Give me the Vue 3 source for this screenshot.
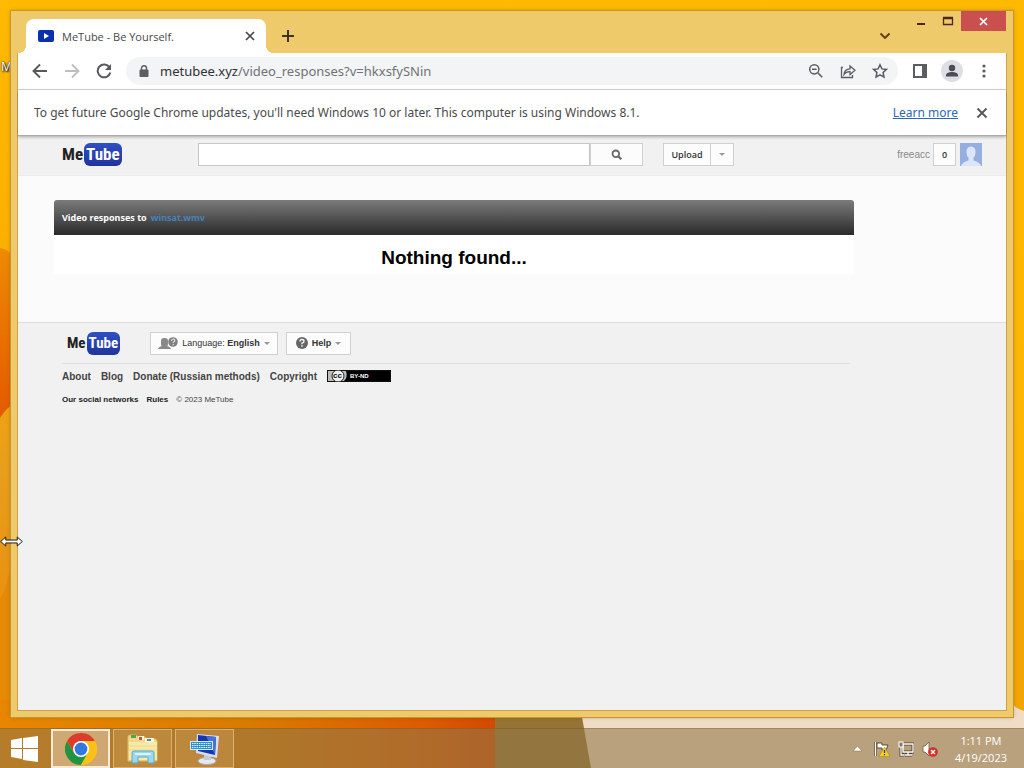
<script setup>
import { ref } from 'vue'

const query = ref('')
const address = ref('metubee.xyz/video_responses?v=hkxsfySNin')
const links = ['About', 'Blog', 'Donate (Russian methods)', 'Copyright']
</script>

<template>
  <div class="desktop">
    <svg class="wallpaper" viewBox="0 0 1024 768" preserveAspectRatio="none" aria-hidden="true">
      <defs>
        <linearGradient id="sky" x1="0" y1="0" x2="0" y2="1">
          <stop offset="0" stop-color="#ffb900" />
          <stop offset=".3" stop-color="#fcb100" />
          <stop offset=".62" stop-color="#e89d1c" />
          <stop offset="1" stop-color="#e88400" />
        </linearGradient>
        <linearGradient id="side" x1="0" y1="0" x2="0" y2="1">
          <stop offset="0" stop-color="#ffb900" />
          <stop offset="1" stop-color="#fbb40a" />
        </linearGradient>
        <linearGradient id="petal" x1="0" y1="0" x2="0" y2="1">
          <stop offset="0" stop-color="#ee8a00" />
          <stop offset="1" stop-color="#e45a00" />
        </linearGradient>
        <linearGradient id="floor" x1="0" y1="0" x2="1" y2="0">
          <stop offset="0" stop-color="#e88600" />
          <stop offset=".5" stop-color="#d97b00" />
          <stop offset=".85" stop-color="#dc5c00" />
          <stop offset="1" stop-color="#d24a00" />
        </linearGradient>
      </defs>
      <rect width="1024" height="768" fill="url(#sky)" />
      <rect x="1000" width="24" height="768" fill="url(#side)" />
      <path d="M0 248Q12 250 14 262V404Q8 406 0 418Z" fill="url(#petal)" />
      <path d="M14 548V717H0V600Q10 580 14 548Z" fill="#e58a06" />
      <rect y="700" width="495" height="68" fill="url(#floor)" />
      <path d="M495 700H580L592 768H495Z" fill="#977434" />
      <path d="M579 700H1024V768H591Z" fill="#f1dcc5" />
      <path d="M1013 560H1024V711Q1016 709 1013 704Z" fill="#f2a605" />
    </svg>
    <span class="desktop-label">M</span>

    <div class="stage">
      <section class="window">
        <header class="titlebar">
          <div class="tab">
            <svg width="16" height="12" viewBox="0 0 16 12"><rect width="16" height="12" rx="2" fill="#0b2fae" /><path d="M6 3l5 3-5 3z" fill="#fff" /></svg>
            <span class="tab-title">MeTube - Be Yourself.</span>
            <button class="plain" aria-label="Close tab"><svg width="10" height="10" viewBox="0 0 10 10"><path d="M1 1l8 8M9 1L1 9" stroke="#45484b" stroke-width="1.7" /></svg></button>
          </div>
          <button class="plain new-tab" aria-label="New tab"><svg width="12" height="12" viewBox="0 0 12 12"><path d="M6 0v12M0 6h12" stroke="#3e3322" stroke-width="2" /></svg></button>
          <button class="plain tab-search" aria-label="Search tabs"><svg width="12" height="8" viewBox="0 0 12 8"><path d="M1.500 1.500L6 6l4.500-4.500" fill="none" stroke="#5c3d12" stroke-width="1.800" /></svg></button>
          <div class="controls">
            <button class="plain" aria-label="Minimize"><svg width="27" height="20" viewBox="0 0 27 20"><path d="M10 13h8" stroke="#4b2808" stroke-width="2" /></svg></button>
            <button class="plain" aria-label="Maximize"><svg width="27" height="20" viewBox="0 0 27 20"><path d="M9.500 7.500h9v6h-9zM9 6.500h10" fill="none" stroke="#4b2808" stroke-width="1.300" /></svg></button>
            <button class="plain close" aria-label="Close"><svg width="45" height="20" viewBox="0 0 45 20"><path d="M19 7l7 7M26 7l-7 7" stroke="#fff" stroke-width="1.700" /></svg></button>
          </div>
        </header>

        <div class="view">
          <nav class="toolbar">
            <button class="plain tool" aria-label="Back"><svg width="16" height="16" viewBox="0 0 16 16"><path d="M15 8H2M8 1.500L1.500 8 8 14.500" fill="none" stroke="#57595c" stroke-width="1.900" /></svg></button>
            <button class="plain tool" aria-label="Forward"><svg width="16" height="16" viewBox="0 0 16 16"><path d="M1 8h13M8 1.500L14.500 8 8 14.500" fill="none" stroke="#bcbebf" stroke-width="1.800" /></svg></button>
            <button class="plain tool" aria-label="Reload"><svg width="16" height="16" viewBox="0 0 16 16"><path d="M13.500 4.500A6.400 6.400 0 1 0 14.300 9.500" fill="none" stroke="#57595c" stroke-width="2" /><path d="M15 1v6H9z" fill="#57595c" /></svg></button>
            <div class="omnibox">
              <svg width="10" height="13" viewBox="0 0 10 13"><rect x="0.500" y="4.500" width="9" height="7.500" rx="1" fill="#5b5e61" /><path d="M2.500 5V3.300a2.500 2.500 0 0 1 5 0V5" fill="none" stroke="#5b5e61" stroke-width="1.400" /></svg>
              <span class="address"><span class="host">{{ address.split('/')[0] }}</span>/{{ address.split('/')[1] }}</span>
              <button class="plain" aria-label="Zoom"><svg width="16" height="16" viewBox="0 0 16 16"><circle cx="6.300" cy="6.300" r="4.600" fill="none" stroke="#5b5e61" stroke-width="1.500" /><path d="M4 6.300h4.600M9.800 9.800l4.400 4.400" stroke="#5b5e61" stroke-width="1.600" /></svg></button>
              <button class="plain" aria-label="Share"><svg width="16" height="16" viewBox="0 0 16 16"><path d="M3 4.500H1.500V14.500H12.500V12M4 11.500Q4.300 6.200 10 5.800V3L15 7.300 10 11.500V8.700Q6 8.500 4 11.500Z" fill="none" stroke="#5b5e61" stroke-width="1.300" /></svg></button>
              <button class="plain" aria-label="Bookmark"><svg width="16" height="16" viewBox="0 0 16 16"><path d="M8 1.800l1.900 4.100 4.500.5-3.300 3.100.9 4.500L8 11.800 4 14l.9-4.500L1.600 6.400l4.500-.5z" fill="none" stroke="#5b5e61" stroke-width="1.500" /></svg></button>
            </div>
            <button class="plain tool" aria-label="Side panel"><svg width="14" height="14" viewBox="0 0 14 14"><rect x="1" y="1" width="12" height="12" fill="none" stroke="#5b5e61" stroke-width="2" /><path d="M9 1h4v12H9z" fill="#5b5e61" /></svg></button>
            <button class="plain tool" aria-label="Profile"><svg width="22" height="22" viewBox="0 0 22 22"><circle cx="11" cy="11" r="11" fill="#dddfe4" /><circle cx="11" cy="8" r="3.200" fill="#494d54" /><path d="M5 16.500v-1.300C5 12.700 9 12 11 12s6 .7 6 3.200v1.300z" fill="#494d54" /></svg></button>
            <button class="plain tool" aria-label="Menu"><svg width="4" height="14" viewBox="0 0 4 14"><circle cx="2" cy="2" r="1.600" fill="#5b5e61" /><circle cx="2" cy="7" r="1.600" fill="#5b5e61" /><circle cx="2" cy="12" r="1.600" fill="#5b5e61" /></svg></button>
          </nav>

          <div class="notice">
            <p>To get future Google Chrome updates, you'll need Windows 10 or later. This computer is using Windows 8.1.</p>
            <a href="#">Learn more</a>
            <button class="plain" aria-label="Dismiss"><svg width="12" height="12" viewBox="0 0 12 12"><path d="M1.500 1.500l9 9M10.500 1.500l-9 9" stroke="#55585b" stroke-width="1.900" /></svg></button>
          </div>

          <div class="page">
            <header class="masthead">
              <a class="logo" href="#"><span>Me</span><span class="tube">Tube</span></a>
              <form class="search" @submit.prevent>
                <input v-model="query" type="text" aria-label="Search" />
                <button class="btn" aria-label="Search"><svg width="12" height="12" viewBox="0 0 12 12"><circle cx="4.800" cy="4.800" r="3.300" fill="none" stroke="#666" stroke-width="1.800" /><path d="M7.300 7.300l3 3" stroke="#666" stroke-width="2.200" /></svg></button>
              </form>
              <div class="upload">
                <button class="btn">Upload</button>
                <button class="btn more" aria-label="More"><span class="caret"></span></button>
              </div>
              <div class="account">
                <a href="#">freeacc</a>
                <button class="btn count">0</button>
                <svg class="avatar" width="22" height="23" viewBox="0 0 22 23"><rect width="22" height="23" fill="#96afe0" /><path d="M1 23Q2 19 8.500 17.500V14.500Q6.500 13 6.500 9.500 6 4 11 3.500 16 4 15.500 9.500 15.500 13 13.500 14.500V17.500Q20 19 21 23Z" fill="#dce6fa" /></svg>
              </div>
            </header>

            <main>
              <h1 class="bar">Video responses to <a href="#">winsat.wmv</a></h1>
              <h2>Nothing found...</h2>
            </main>

            <footer>
              <div class="foot-top">
                <a class="logo" href="#"><span>Me</span><span class="tube">Tube</span></a>
                <button class="btn language">
                  <svg width="20" height="13" viewBox="0 0 20 13"><rect x="3" y="1" width="7" height="9" rx="3" fill="#888" /><path d="M0 12q1-3 5-3h3q4 0 5 3z" fill="#888" /><circle cx="15" cy="5" r="4.800" fill="#808080" /><path d="M13.500 4q0-2 1.700-2t1.600 1.500q0 1-1.600 1.800V6M15.200 7v1.300" fill="none" stroke="#e4e4e4" stroke-width="1.100" /></svg>
                  <span>Language: <b>English</b></span><span class="caret"></span>
                </button>
                <button class="btn help">
                  <svg width="12" height="12" viewBox="0 0 12 12"><circle cx="6" cy="6" r="6" fill="#666" /><path d="M4 4.500Q4 2.500 6 2.500t2 1.700Q8 5.300 6 6.200V7.200M6 8.300v1.500" fill="none" stroke="#f5f5f5" stroke-width="1.400" /></svg>
                  <b>Help</b><span class="caret"></span>
                </button>
              </div>
              <div class="links">
                <a v-for="l in links" :key="l" href="#">{{ l }}</a>
                <svg width="64" height="12" viewBox="0 0 64 12" role="img" aria-label="CC BY-ND"><rect width="64" height="12" fill="#111" /><rect x="1" y="1" width="62" height="10" fill="#bbb" /><path d="M19 1h44v10H17q4-4 2-10z" fill="#000" /><circle cx="11" cy="6" r="6" fill="#eee" stroke="#222" /><text x="6" y="8" font-family="Liberation Sans" font-weight="bold" font-size="8" fill="#111">cc</text><text x="23" y="8" font-family="Liberation Sans" font-weight="bold" font-size="6" fill="#fff">BY-ND</text></svg>
              </div>
              <div class="legal"><a href="#">Our social networks</a><a href="#">Rules</a><span>© 2023 MeTube</span></div>
            </footer>
          </div>
        </div>
      </section>
    </div>

    <div class="taskbar">
      <button class="plain start" aria-label="Start"><svg width="27" height="26" viewBox="0 0 27 26"><path d="M0 4l11-2v10H0zM12 2l15-2v12H12zM0 13h11v10L0 21zM12 13h15v13l-15-2z" fill="#fff" /></svg></button>
      <button class="plain task active" aria-label="Google Chrome">
        <svg width="32" height="32" viewBox="0 0 32 32"><circle cx="16" cy="16" r="16" fill="#fbc116" /><path d="M2.140 8A16 16 0 0 1 29.860 8H16L9 20z" fill="#dc3c2e" /><path d="M2.140 8A16 16 0 0 0 16 32L22.900 20 9 20z" fill="#229342" /><path d="M16 8h13.860A16 16 0 0 1 16 32l6.900-12z" fill="#fbc116" /><circle cx="16" cy="16" r="8" fill="#fff" /><circle cx="16" cy="16" r="6.400" fill="#3478df" /></svg>
      </button>
      <button class="plain task" aria-label="File Explorer">
        <svg width="32" height="30" viewBox="0 0 32 30"><path d="M1 3q0-2 2-2h6l2 2h7l2 2h8q2 0 2 2v20H1z" fill="#efd889" stroke="#d8bd68" /><path d="M4 1h5v3H4z" fill="#49a849" /><path d="M11 2h6v4h-6z" fill="#fff4cc" /><path d="M12 3h3v3h-3z" fill="#d14f36" /><path d="M18 4h9v5h-9z" fill="#f8f6e2" /><path d="M20 5h4v2h-4z" fill="#3c9798" /><path d="M2 8h28v18H2z" fill="#f7e9a8" /><path d="M2 12h28M2 16h28" stroke="#ecd98a" /><path d="M5 29v-10q0-2 2-2h18q2 0 2 2v10h-6v-6H11v6z" fill="#9bd8ef" stroke="#59a9ce" /><path d="M8 20h16" stroke="#d9f4ff" stroke-width="2" /></svg>
      </button>
      <button class="plain task" aria-label="On-Screen Keyboard">
        <svg width="32" height="32" viewBox="0 0 32 32"><ellipse cx="18" cy="28" rx="9" ry="3.500" fill="#e5e8ed" stroke="#a8acb5" /><path d="M15 21h7v6h-7z" fill="#c4c9d2" /><path d="M8 1L30 3 28 25 7 20z" fill="#d9def0" /><path d="M9 2L27 4 26 22 9 18z" fill="#1336b1" /><path d="M17 3L27 4 26 22z" fill="#4870dc" /><rect x="1.500" y="8.500" width="22" height="8" fill="#2b8fca" stroke="#d5ecfa" /><path d="M3 10.500h19M3 12.500h19M3 14.500h19" stroke="#e5f4ff" stroke-width="1.200" stroke-dasharray="1.500 .8" /></svg>
      </button>
      <div class="tray">
        <svg width="9" height="6" viewBox="0 0 9 6"><path d="M0 5L4.500 0 9 5z" fill="#fff" stroke="#806c4d" stroke-width=".5" /></svg>
        <svg width="16" height="16" viewBox="0 0 16 16"><path d="M1.500 1v14" stroke="#5d4b32" stroke-width="3" /><path d="M1.500 1v14" stroke="#fff" stroke-width="1.400" /><path d="M3 2h5v2h6l-2 5H8V7H3z" fill="#fff" stroke="#594c37" /><path d="M10.500 6L16 15.500H5z" fill="#f6d51f" stroke="#a78c00" stroke-width=".6" /><path d="M10.500 9v3M10.500 13v1.300" stroke="#443a10" stroke-width="1.300" /></svg>
        <svg width="16" height="16" viewBox="0 0 16 16"><path d="M5 3h10v8H4M7 14h7M10 11v3M3 1v13h3" fill="none" stroke="#50432f" stroke-width="3" /><path d="M5 3h10v8H5zM7 14h7M10 11v3M3 6v8h3" fill="none" stroke="#fff" stroke-width="1.300" /><rect x="1" y="1" width="4" height="5" fill="#8d7859" stroke="#fff" /></svg>
        <svg width="16" height="16" viewBox="0 0 16 16"><path d="M1 5h2l4-4v14l-4-4H1z" fill="#fff" stroke="#6c5a3f" stroke-width=".8" /><circle cx="11" cy="11" r="4.800" fill="#d52c28" /><path d="M9 9l4 4M13 9l-4 4" stroke="#fff" stroke-width="1.500" /></svg>
        <div class="clock"><span>1:11 PM</span><span>4/19/2023</span></div>
      </div>
    </div>

    <svg class="pointer" width="23" height="11" viewBox="0 0 24 11" aria-hidden="true"><path d="M.7 5.500L6 .8V4H18V.8L23.300 5.500 18 10.200V7H6v3.200z" fill="#fff" stroke="#111" /></svg>
  </div>
</template>

<style>
body { margin: 0; }
</style>

<style scoped>
* { box-sizing: border-box; }
.desktop { position: relative; display: flex; flex-direction: column; min-height: 100vh; overflow: hidden; font-family: "Noto Sans", "Open Sans", sans-serif; color: #4a4a4a; }
.wallpaper { position: absolute; inset: 0; width: 100%; height: 100%; }
.desktop-label { position: absolute; left: 1px; top: 58px; font-size: 12px; color: #fff; text-shadow: 1px 1px 2px #000, 0 0 2px #000; }
.stage { position: relative; flex: 1; display: flex; padding: 11px; }
.window { flex: 1; display: flex; flex-direction: column; min-width: 0; padding: 0 7px 7px; background: #efca6a; outline: 1px solid #c49637; box-shadow: 0 0 4px rgba(80, 50, 0, .4); }
.plain { display: flex; align-items: center; justify-content: center; border: 0; padding: 0; background: none; font: inherit; color: inherit; }
a { color: inherit; text-decoration: none; }
svg { display: block; flex: none; }

.titlebar { display: flex; align-items: flex-end; height: 42px; padding-left: 8px; }
.tab { position: relative; display: flex; align-items: center; width: 240px; height: 34px; padding: 0 11px 0 12px; border-radius: 8px 8px 0 0; background: #fff; font-family: "Open Sans", sans-serif; font-size: 11px; }
.tab::before, .tab::after { content: ""; position: absolute; bottom: 0; width: 8px; height: 8px; }
.tab::before { right: 100%; background: radial-gradient(circle at 0 0, transparent 8px, #fff 8px); }
.tab::after { left: 100%; background: radial-gradient(circle at 100% 0, transparent 8px, #fff 8px); }
.tab-title { flex: 1; margin-left: 8px; }
.new-tab { height: 34px; margin-left: 16px; }
.tab-search { height: 34px; margin-left: auto; margin-right: 16px; }
.controls { display: flex; align-self: flex-start; }
.close { background: #ca5050; }

.view { flex: 1; display: flex; flex-direction: column; background: #fff; outline: 1px solid #cfa24a; clip-path: inset(0 -1px -1px -1px); }
.toolbar { display: flex; align-items: center; height: 37px; padding: 0 6px 0; border-bottom: 1px solid #d4d6d8; }
.tool { width: 32px; height: 32px; }
.omnibox { flex: 1; display: flex; align-items: center; gap: 16px; height: 28px; margin: 0 6px; padding: 0 10px 0 13px; border-radius: 14px; background: #f2f4f5; }
.address { flex: 1; margin-left: -5px; font-size: 13px; color: #707376; }
.host { color: #303235; }
.notice { position: relative; display: flex; align-items: center; height: 46px; padding: 0 18px 0 16px; font-size: 12px; background: #fff; border-bottom: 1px solid #aaa; box-shadow: 0 1px 3px rgba(0, 0, 0, .3); }
.notice p { flex: 1; margin: 0; }
.notice a { margin-right: 18px; color: #2c69b4; text-decoration: underline; }

.page { flex: 1; display: flex; flex-direction: column; background: #f1f1f1; font-family: "Liberation Sans", sans-serif; }
.masthead { display: flex; align-items: center; height: 40px; padding: 0 24px 2px 44px; border-bottom: 1px solid #ececec; }
.logo { display: flex; align-items: center; gap: 1px; color: #222; font-family: "Roboto Condensed", Roboto, sans-serif; font-size: 17px; font-weight: 700; line-height: 23px; }
.tube { padding: 0 2px; border-radius: 6px; background: linear-gradient(#2e4fc6, #20349b); color: #fff; }
.masthead .logo { width: 136px; }
.btn { display: flex; align-items: center; justify-content: center; height: 23px; padding: 0; border: 1px solid #d0d0d0; background: #fcfcfc; color: #333; font-family: "Open Sans", sans-serif; font-size: 9px; font-weight: 600; }
.search { display: flex; width: 445px; }
.search input { flex: 1; min-width: 0; height: 23px; padding: 0 6px; border: 1px solid #c6c6c6; background: #fff; }
.search .btn { width: 53px; }
.upload { display: flex; margin-left: 20px; }
.upload .btn { width: 48px; }
.upload .more { width: 23px; border-left: 0; }
.caret { border: 3px solid transparent; border-top-color: #999; border-bottom: 0; }
.account { display: flex; align-items: center; margin-left: auto; font-size: 10px; color: #888; }
.count { width: 23px; margin: 0 4px 0 3px; }
main { padding: 24px 36px 48px; background: #fbfbfb; border-bottom: 1px solid #dcdcdc; }
.bar, main h2 { max-width: 800px; margin: 0; }
.bar { display: flex; align-items: center; gap: 4px; height: 35px; padding: 0 8px; border-radius: 3px 3px 0 0; background: linear-gradient(#7b7b7b, #2a2a2a); color: #fff; font-family: "Noto Sans", sans-serif; font-size: 9px; font-weight: 700; }
.bar a { color: #4383bd; }
main h2 { height: 39px; background: #fff; color: #000; font-size: 19px; line-height: 45px; text-align: center; }

footer { padding: 8px 44px 0; color: #444; font-size: 8px; }
.foot-top { display: flex; align-items: center; max-width: 788px; height: 33px; padding: 0 0 8px 5px; border-bottom: 1px solid #dedede; }
.foot-top .logo { width: 83px; font-size: 15px; }
.foot-top .btn { gap: 4px; font-family: "Liberation Sans", sans-serif; font-weight: 400; }
.language { width: 128px; }
.help { width: 65px; margin-left: 8px; }
.links, .legal { display: flex; align-items: center; gap: 8px; }
.links { gap: 10px; height: 24px; font-size: 10px; font-weight: 700; }
.legal { height: 22px; }
.legal a { color: #222; font-weight: 700; }

.taskbar { position: relative; display: flex; align-items: stretch; gap: 3px; height: 40px; background: rgba(144, 119, 72, .58); border-top: 1px solid rgba(110, 75, 20, .3); }
.start { width: 48px; }
.task { width: 59px; border: 1px solid rgba(235, 200, 145, .65); background: rgba(225, 180, 115, .25); }
.active { border: 2px solid #f8ead6; background: rgba(230, 204, 174, .55); }
.tray { display: flex; align-items: center; gap: 8px; margin-left: auto; padding-right: 17px; color: #fff; }
.tray > svg:first-child { margin-right: 4px; }
.clock { display: flex; flex-direction: column; align-items: center; margin-left: 9px; font-family: "Open Sans", sans-serif; font-size: 11px; line-height: 17px; }
.pointer { position: absolute; left: 0; top: 536px; }
</style>
